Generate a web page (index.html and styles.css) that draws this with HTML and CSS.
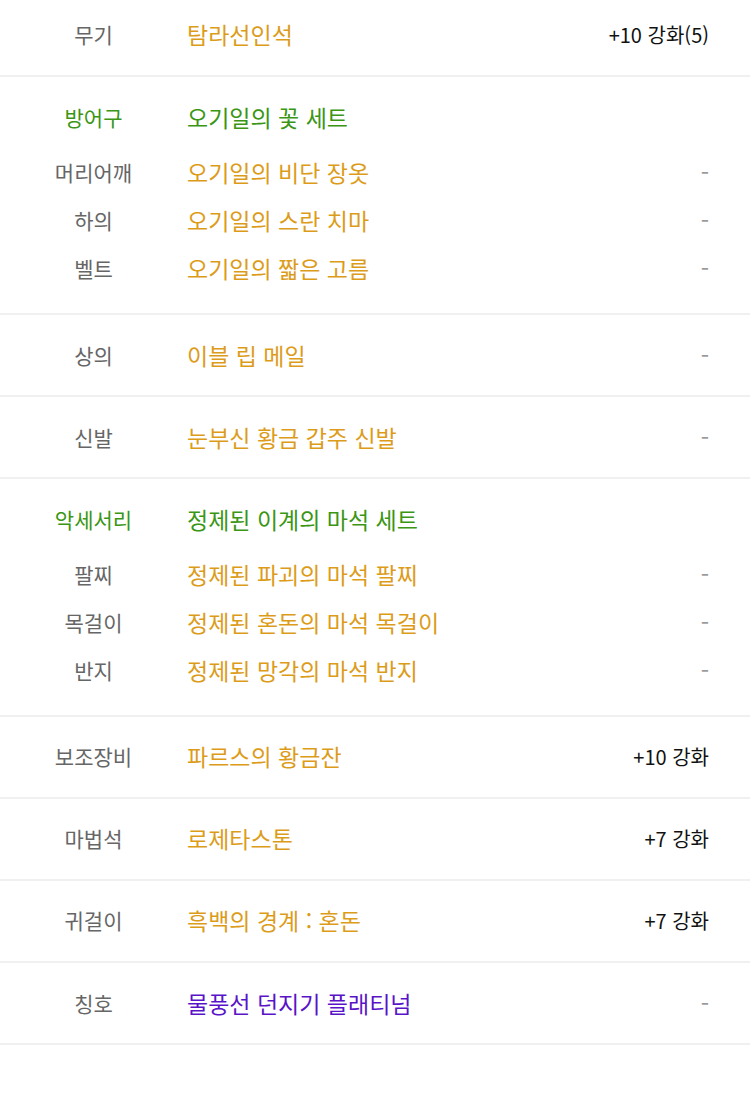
FILE: index.html
```html
<!DOCTYPE html>
<html lang="ko">
<head>
    <meta charset="UTF-8">
    <meta name="viewport" content="width=device-width, initial-scale=1.0">
    <title>장비 정보</title>
    <link rel="stylesheet" href="styles.css">
</head>
<body>
    <div id="equipList">
        <div class="section first">
            <div class="row">
                <span class="label">무기</span>
                <span class="name gold">탐라선인석</span>
                <span class="value">+10 강화(5)</span>
            </div>
        </div>

        <div class="section group">
            <div class="row title">
                <span class="label green">방어구</span>
                <span class="name green">오기일의 꽃 세트</span>
                <span class="value"></span>
            </div>
            <div class="row">
                <span class="label">머리어깨</span>
                <span class="name gold">오기일의 비단 장옷</span>
                <span class="value dash">-</span>
            </div>
            <div class="row">
                <span class="label">하의</span>
                <span class="name gold">오기일의 스란 치마</span>
                <span class="value dash">-</span>
            </div>
            <div class="row">
                <span class="label">벨트</span>
                <span class="name gold">오기일의 짧은 고름</span>
                <span class="value dash">-</span>
            </div>
        </div>

        <div class="section">
            <div class="row">
                <span class="label">상의</span>
                <span class="name gold">이블 립 메일</span>
                <span class="value dash">-</span>
            </div>
        </div>

        <div class="section">
            <div class="row">
                <span class="label">신발</span>
                <span class="name gold">눈부신 황금 갑주 신발</span>
                <span class="value dash">-</span>
            </div>
        </div>

        <div class="section group">
            <div class="row title">
                <span class="label green">악세서리</span>
                <span class="name green">정제된 이계의 마석 세트</span>
                <span class="value"></span>
            </div>
            <div class="row">
                <span class="label">팔찌</span>
                <span class="name gold">정제된 파괴의 마석 팔찌</span>
                <span class="value dash">-</span>
            </div>
            <div class="row">
                <span class="label">목걸이</span>
                <span class="name gold">정제된 혼돈의 마석 목걸이</span>
                <span class="value dash">-</span>
            </div>
            <div class="row">
                <span class="label">반지</span>
                <span class="name gold">정제된 망각의 마석 반지</span>
                <span class="value dash">-</span>
            </div>
        </div>

        <div class="section">
            <div class="row">
                <span class="label">보조장비</span>
                <span class="name gold">파르스의 황금잔</span>
                <span class="value">+10 강화</span>
            </div>
        </div>

        <div class="section">
            <div class="row">
                <span class="label">마법석</span>
                <span class="name gold">로제타스톤</span>
                <span class="value">+7 강화</span>
            </div>
        </div>

        <div class="section">
            <div class="row">
                <span class="label">귀걸이</span>
                <span class="name gold">흑백의 경계 : 혼돈</span>
                <span class="value">+7 강화</span>
            </div>
        </div>

        <div class="section">
            <div class="row">
                <span class="label">칭호</span>
                <span class="name purple">물풍선 던지기 플래티넘</span>
                <span class="value dash">-</span>
            </div>
        </div>
    </div>
</body>
</html>
```

FILE: styles.css
```css
body {
    margin: 0;
    background: #fff;
    font-family: "Noto Sans CJK KR", "Noto Sans", sans-serif;
    color: #222;
}

#equipList {
    width: 750px;
}

.section {
    padding: 22px 0 28px;
    border-bottom: 2px solid #f0f0f0;
}

.section.first {
    padding: 17px 0 28px;
}

.section.group {
    padding: 23px 0 33px;
    display: flex;
    flex-direction: column;
    gap: 18px;
}

.row {
    display: grid;
    grid-template-columns: 187px 1fr auto;
    align-items: center;
    height: 30px;
    padding-right: 41px;
}

.row.title {
    margin-bottom: 6px;
}

.label {
    text-align: center;
    font-size: 21px;
    color: #666;
}

.name {
    font-size: 23px;
}

.value {
    font-size: 20px;
    color: #111;
    text-align: right;
}

.value.dash {
    color: #999;
    font-size: 24px;
}

.gold { color: #dc9c1a; }
.green { color: #3a9614; }
.purple { color: #5a14c8; }
```
